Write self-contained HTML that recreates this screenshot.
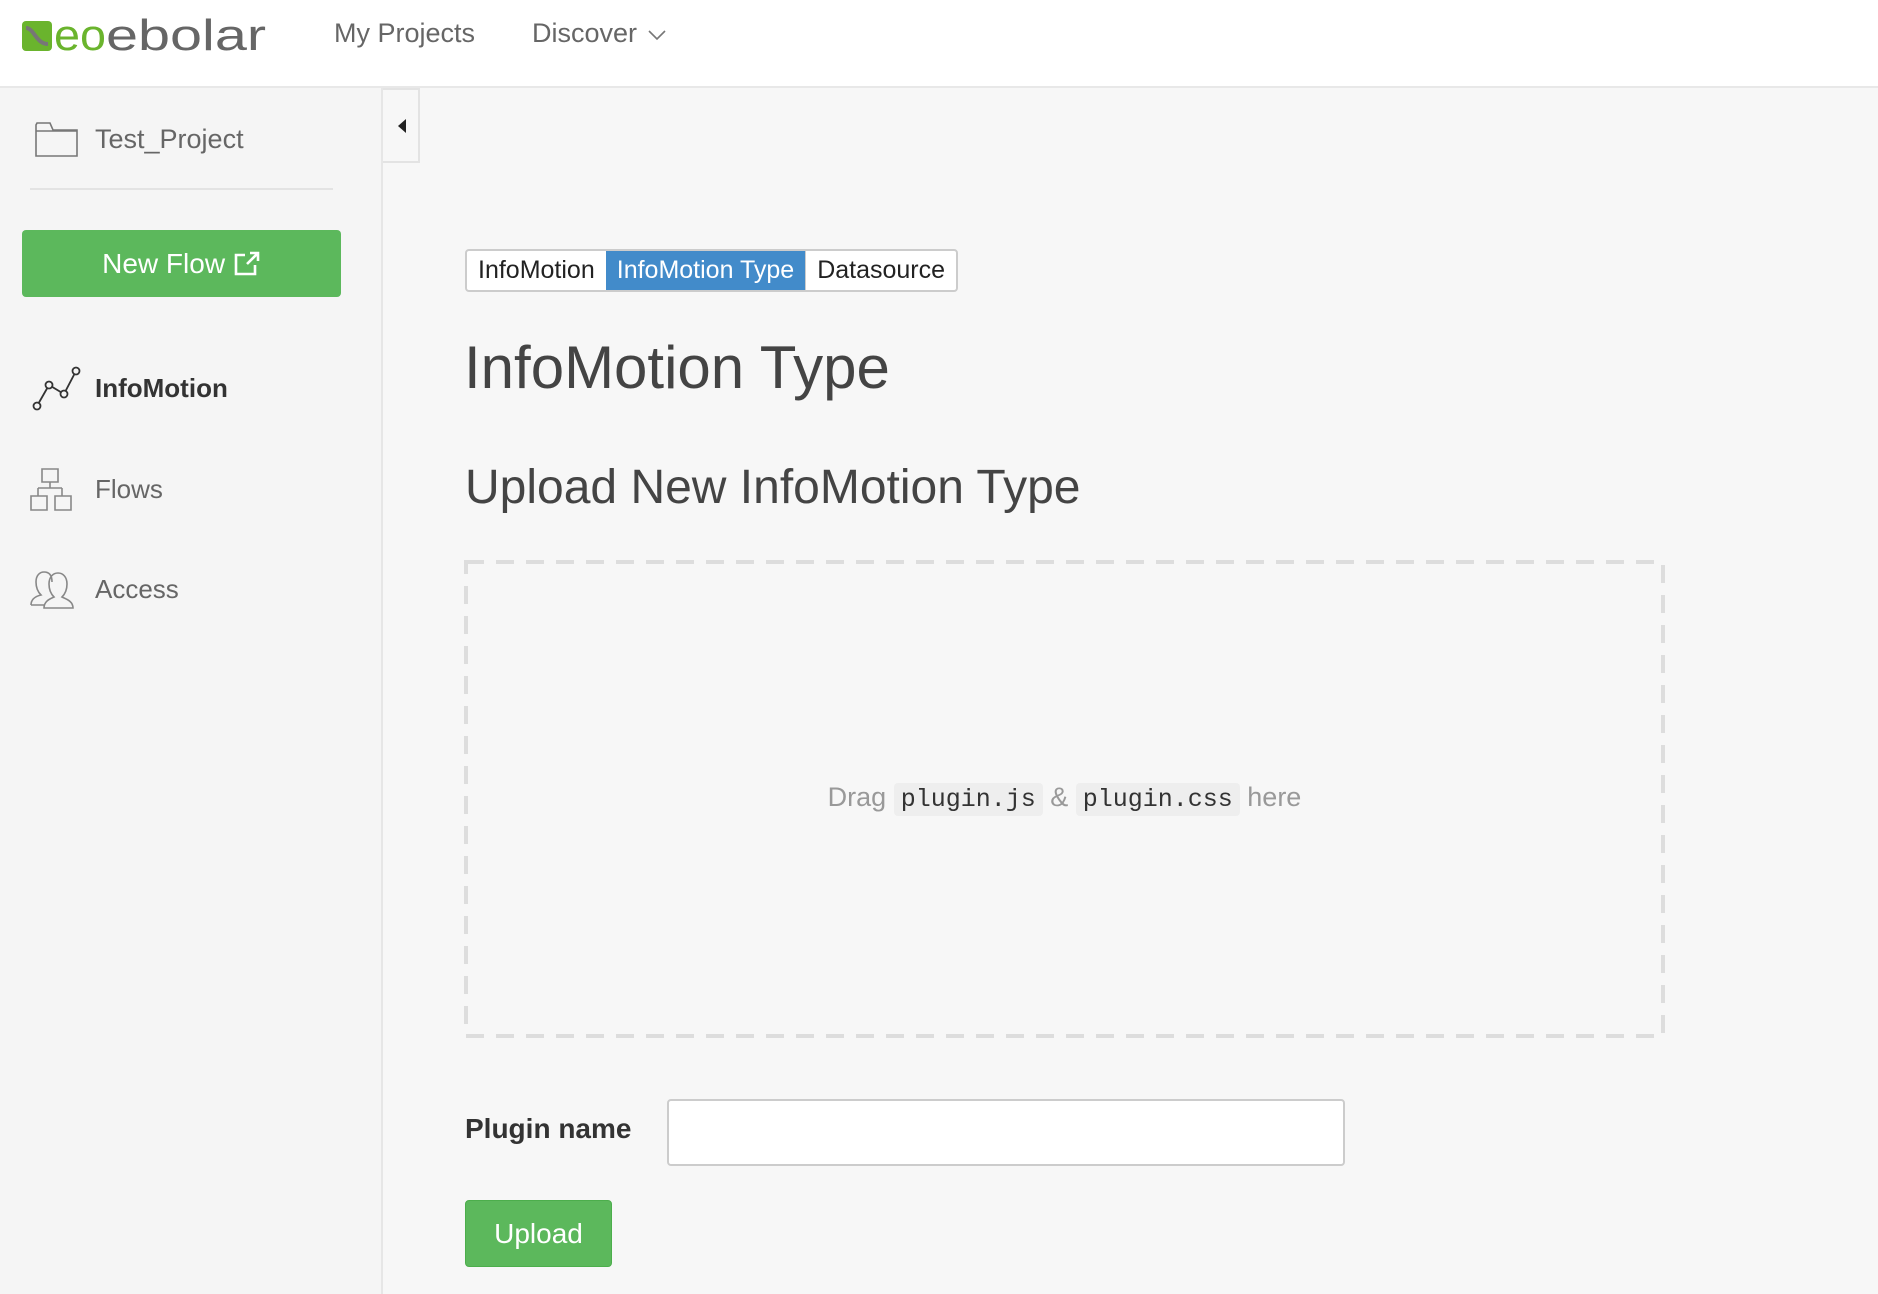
<!DOCTYPE html>
<html><head><meta charset="utf-8"><style>
*{box-sizing:border-box;margin:0;padding:0}
body{width:1878px;height:1294px;background:#f7f7f7;font-family:"Liberation Sans",sans-serif;position:relative;overflow:hidden;color:#333}
.hdr{position:absolute;left:0;top:0;width:1878px;height:88px;background:#fff;border-bottom:2px solid #e8e8e8}
.abs{position:absolute}
.side{position:absolute;left:0;top:88px;width:383px;height:1206px;background:#f5f5f5;border-right:2px solid #e6e6e6}
.nav{position:absolute;left:95px;font-size:26px;color:#666}
</style></head><body>
<div class="hdr">
 <svg class="abs" style="left:22px;top:18px" width="250" height="36" viewBox="0 0 250 36">
  <rect x="0" y="3" width="30" height="30" rx="4" fill="#6ab42d"/>
  <path d="M4 10 C12 10 14 26 26 26" stroke="#777" stroke-width="4" fill="none"/>
  <text x="32" y="32" font-size="44" font-family="Liberation Sans" fill="#6ab42d" textLength="52" lengthAdjust="spacingAndGlyphs">eo</text>
  <text x="84" y="32" font-size="44" font-family="Liberation Sans" fill="#666" textLength="160" lengthAdjust="spacingAndGlyphs">ebolar</text>
 </svg>
 <div class="abs" style="left:334px;top:18px;font-size:27px;color:#666">My Projects</div>
 <div class="abs" style="left:532px;top:18px;font-size:27px;color:#666">Discover</div>
 <svg class="abs" style="left:648px;top:29px" width="18" height="12"><path d="M1 2 L9 10 L17 2" stroke="#777" stroke-width="1.6" fill="none"/></svg>
</div>
<div class="side">
 <svg class="abs" style="left:35px;top:33px" width="43" height="36"><path d="M1 4 L1 35 L42 35 L42 9 L18 9 L15 2 L2 2 Z M1 10 L42 10" stroke="#777" stroke-width="1.6" fill="none"/></svg>
 <div class="abs" style="left:95px;top:36px;font-size:27px;color:#666">Test_Project</div>
 <div class="abs" style="left:30px;top:100px;width:303px;height:2px;background:#e3e3e3"></div>
 <div class="abs" style="left:22px;top:142px;width:319px;height:67px;background:#5cb85c;border-radius:4px;color:#fff;font-size:28px;text-align:center;line-height:67px">New Flow <svg width="28" height="26" viewBox="0 0 28 26" style="vertical-align:-3px"><path d="M12 5 L3 5 L3 24 L22 24 L22 15 M14 14 L25 3 M17 3 L25 3 L25 11" stroke="#fff" stroke-width="2.6" fill="none"/></svg></div>
 <svg class="abs" style="left:30px;top:276px" width="54" height="50"><path d="M7 42 L19 21 L34 30 L46 7" stroke="#333" stroke-width="1.8" fill="none"/><circle cx="7" cy="42" r="3.5" fill="#f5f5f5" stroke="#333" stroke-width="1.8"/><circle cx="19" cy="21" r="3.5" fill="#f5f5f5" stroke="#333" stroke-width="1.8"/><circle cx="34" cy="30" r="3.5" fill="#f5f5f5" stroke="#333" stroke-width="1.8"/><circle cx="46" cy="7" r="3.5" fill="#f5f5f5" stroke="#333" stroke-width="1.8"/></svg>
 <div class="nav" style="top:285px;font-weight:bold;color:#333">InfoMotion</div>
 <svg class="abs" style="left:30px;top:380px" width="44" height="44"><path d="M12 1 H28 V14 H12 Z M20 14 V20 M8 20 H32 M8 20 V28 M32 20 V28 M1 28 H17 V42 H1 Z M25 28 H41 V42 H25 Z" stroke="#888" stroke-width="1.6" fill="none"/></svg>
 <div class="nav" style="top:386px">Flows</div>
 <svg class="abs" style="left:29px;top:482px" width="50" height="40"><path d="M2 35 C2 28 8 26 12 25 C9 22 7 18 7 12 C7 5 11 2 15 2 C20 2 23 5 23 12 M15 38 C15 31 21 29 25 27 C22 24 20 20 20 14 C20 7 24 3 29 3 C34 3 38 7 38 14 C38 20 36 24 33 27 C37 29 44 31 44 38 Z M2 35 L15 35" stroke="#888" stroke-width="1.6" fill="#f5f5f5"/></svg>
 <div class="nav" style="top:486px">Access</div>
</div>
<div class="abs" style="left:383px;top:88px;width:37px;height:75px;border:2px solid #e3e3e3;border-left:none;background:#f7f7f7"></div>
<svg class="abs" style="left:397px;top:118px" width="10" height="16"><path d="M9 1 L1 8 L9 15 Z" fill="#222"/></svg>
<div class="abs" style="left:465px;top:249px;height:43px;display:flex;font-size:25px;line-height:39px;border:2px solid #ccc;border-radius:4px;overflow:hidden;background:#fff;color:#222">
 <div style="padding:0 11px">InfoMotion</div>
 <div style="padding:0 11px;background:#428bca;color:#fff">InfoMotion Type</div>
 <div style="padding:0 11px;border-left:1px solid #ccc">Datasource</div>
</div>
<div class="abs" style="left:464px;top:333px;font-size:60px;color:#444;font-weight:300">InfoMotion Type</div>
<div class="abs" style="left:465px;top:460px;font-size:48px;color:#444;font-weight:300">Upload New InfoMotion Type</div>
<svg class="abs" style="left:464px;top:560px" width="1201" height="478"><rect x="2" y="2" width="1197" height="474" fill="none" stroke="#ddd" stroke-width="4" stroke-dasharray="18 12"/></svg>
<div class="abs" style="left:465px;top:782px;width:1199px;text-align:center;font-size:27px;color:#999">Drag <code style="font-family:'Liberation Mono',monospace;background:#eee;color:#333;padding:2px 7px;border-radius:4px;font-size:25px">plugin.js</code> &amp; <code style="font-family:'Liberation Mono',monospace;background:#eee;color:#333;padding:2px 7px;border-radius:4px;font-size:25px">plugin.css</code> here</div>
<div class="abs" style="left:465px;top:1113px;font-size:28px;font-weight:bold;color:#333">Plugin name</div>
<div class="abs" style="left:667px;top:1099px;width:678px;height:67px;border:2px solid #ccc;border-radius:4px;background:#fff"></div>
<div class="abs" style="left:465px;top:1200px;width:147px;height:67px;background:#5cb85c;border:1px solid #4cae4c;border-radius:4px;color:#fff;font-size:28px;text-align:center;line-height:65px">Upload</div>
</body></html>
